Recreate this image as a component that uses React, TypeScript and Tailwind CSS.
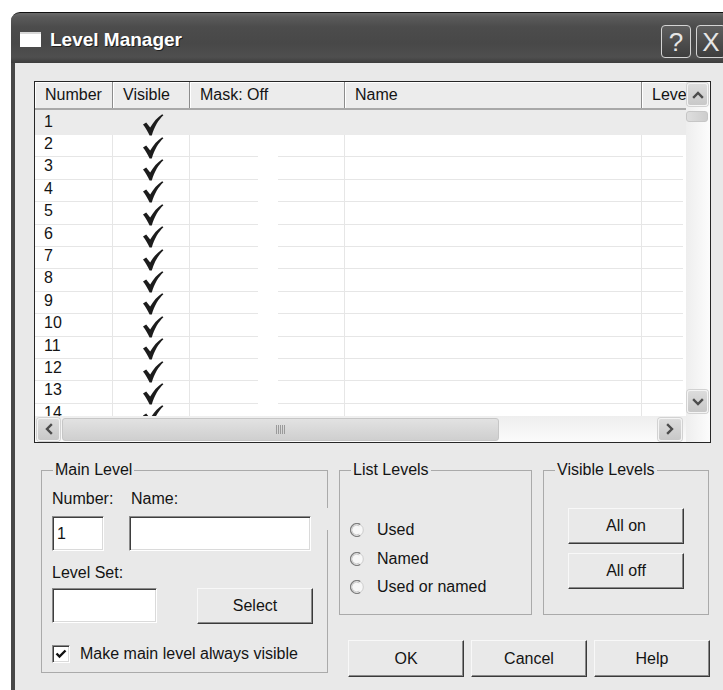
import React from "react";

type Dir = "up" | "down" | "left" | "right";

function Tick() {
  return (
    <svg width="21" height="22" viewBox="0 0 21 22" className="block">
      <path
        d="M0 10.5 L3.2 8.4 L7.2 13.6 C10.2 8 14.2 3.6 19.2 0.2 L20.4 1.3 C15.4 6 11.4 12.6 8.8 21.6 L6.6 21.6 C4.6 17.2 2.6 13.8 0 10.5 Z"
        fill="#1c1c1c"
      />
    </svg>
  );
}

function Chevron({ dir }: { dir: Dir }) {
  const d = {
    up: "M2 8 L6 4 L10 8",
    down: "M2 4 L6 8 L10 4",
    left: "M8 2 L4 6 L8 10",
    right: "M4 2 L8 6 L4 10",
  }[dir];
  return (
    <svg width="12" height="12" viewBox="0 0 12 12" className="block">
      <path d={d} fill="none" stroke="#4c4c4c" strokeWidth="2.4" strokeLinecap="square" strokeLinejoin="miter" />
    </svg>
  );
}

function ScrollButton({ dir, className }: { dir: Dir; className: string }) {
  return (
    <div
      className={`flex items-center justify-center rounded-[3px] border border-[#f4f4f4] bg-[linear-gradient(180deg,#dcdcdc,#c8c8c8)] shadow-[0_0_0_1px_#d2d2d2] ${className}`}
    >
      <Chevron dir={dir} />
    </div>
  );
}

function Grip() {
  return (
    <div className="flex gap-[1px]">
      {[0, 1, 2, 3, 4].map((i) => (
        <div key={i} className="h-[9px] w-[1px] bg-[#9a9a9a]" />
      ))}
    </div>
  );
}

function ListRow({ n, first }: { n: number; first?: boolean }) {
  const cellB = first ? "" : "border-b border-[#e6e6e6]";
  const cellRB = first ? "" : "border-b border-r border-[#e6e6e6]";
  return (
    <div className="flex h-[22.42px] shrink-0">
      <div className={`w-[78px] shrink-0 pl-[9px] leading-[18px] ${cellRB}`}>{n}</div>
      <div className={`w-[77px] shrink-0 pl-[30px] pt-[1.5px] ${cellRB}`}>
        <Tick />
      </div>
      <div className={`w-[68px] shrink-0 ${cellB}`} />
      <div className="w-[20px] shrink-0" />
      <div className={`w-[67px] shrink-0 ${cellRB}`} />
      <div className={`w-[297px] shrink-0 ${cellRB}`} />
      <div className={`w-[41px] shrink-0 ${cellB}`} />
    </div>
  );
}

function ListBox() {
  const rows = Array.from({ length: 13 }, (_, i) => i + 2);
  return (
    <div className="flex h-[362px] w-[677px] shrink-0 border border-[#262626] bg-white">
      <div className="flex min-w-0 flex-1 flex-col">
        <div className="flex min-h-0 flex-1 flex-col overflow-hidden">
          {/* column headers */}
          <div className="flex h-[28px] shrink-0 border-b-2 border-[#a8a8a8] bg-[#ececec]">
            <div className="flex w-[78px] shrink-0 items-center border-r border-[#8c8c8c] pl-[10px] shadow-[inset_1px_1px_0_#ffffff]">
              Number
            </div>
            <div className="flex w-[77px] shrink-0 items-center border-r border-[#8c8c8c] pl-[10px] shadow-[inset_1px_1px_0_#ffffff]">
              Visible
            </div>
            <div className="flex w-[155px] shrink-0 items-center border-r border-[#8c8c8c] pl-[10px] shadow-[inset_1px_1px_0_#ffffff]">
              Mask: Off
            </div>
            <div className="flex w-[297px] shrink-0 items-center border-r border-[#8c8c8c] pl-[10px] shadow-[inset_1px_1px_0_#ffffff]">
              Name
            </div>
            <div className="flex w-[80px] shrink-0 items-center pl-[10px] shadow-[inset_1px_1px_0_#ffffff]">
              Level
            </div>
          </div>
          {/* rows */}
          <div className="h-[25px] shrink-0 bg-[#ebebeb] pt-[2.6px]">
            <ListRow n={1} first />
          </div>
          {rows.map((n) => (
            <ListRow key={n} n={n} />
          ))}
        </div>
        {/* horizontal scrollbar */}
        <div className="flex h-[26px] shrink-0 items-center bg-[linear-gradient(180deg,#eeeeee,#fbfbfb)]">
          <ScrollButton dir="left" className="ml-[2px] h-[23px] w-[23px]" />
          <div className="ml-[2px] flex h-[23px] w-[437px] items-center justify-center rounded-[3px] border border-[#c6c6c6] bg-[linear-gradient(180deg,#e2e2e2,#cfcfcf)]">
            <Grip />
          </div>
          <div className="flex-1" />
          <ScrollButton dir="right" className="mr-[4px] h-[23px] w-[24px]" />
        </div>
      </div>
      {/* vertical scrollbar */}
      <div className="flex w-[24px] shrink-0 flex-col bg-[linear-gradient(90deg,#eeeeee,#fcfcfc)]">
        <ScrollButton dir="up" className="ml-[1px] mt-[1px] h-[23px] w-[21px]" />
        <div className="mt-[5px] h-[11px] w-[22px] rounded-[3px] border border-[#c6c6c6] bg-[linear-gradient(90deg,#dedede,#cdcdcd)]" />
        <div className="flex-1" />
        <ScrollButton dir="down" className="ml-[1px] h-[23px] w-[21px]" />
        <div className="h-[29px] shrink-0" />
      </div>
    </div>
  );
}

function Button({ label, className }: { label: string; className: string }) {
  return (
    <div
      className={`flex items-center justify-center border border-b-[#3a3a3a] border-l-[#f8f8f8] border-r-[#3a3a3a] border-t-[#f8f8f8] bg-[#e9e9e9] shadow-[inset_-1px_-1px_0_#8a8a8a] ${className}`}
    >
      {label}
    </div>
  );
}

function TextBox({ className, children }: { className: string; children?: React.ReactNode }) {
  return (
    <div
      className={`flex items-center border border-b-white border-l-[#8a8a8a] border-r-white border-t-[#8a8a8a] bg-white pl-[4px] shadow-[inset_1px_1px_0_#3e3e3e,inset_-1px_-1px_0_#dadada] ${className}`}
    >
      {children}
    </div>
  );
}

function Radio({ label }: { label: string }) {
  return (
    <div className="flex h-[28.5px] items-center">
      <svg width="14" height="14" viewBox="0 0 14 14" className="block shrink-0">
        <circle cx="7" cy="7" r="6.3" fill="#f7f7f7" stroke="#c4c4c4" strokeWidth="0.8" />
        <path d="M10.2 1.5 A6.4 6.4 0 1 0 10.2 12.5" fill="none" stroke="#7e7e7e" strokeWidth="1.4" />
        <path d="M9.4 2.9 A4.9 4.9 0 1 0 9.4 11.1" fill="none" stroke="#c9c9c9" strokeWidth="1" />
      </svg>
      <span className="ml-[13px] leading-[18px]">{label}</span>
    </div>
  );
}

function Group({
  title,
  className,
  children,
}: {
  title: string;
  className: string;
  children?: React.ReactNode;
}) {
  return (
    <fieldset className={`relative shrink-0 border border-[#aaaaaa] ${className}`}>
      <legend className="ml-[11px] px-[2px] leading-[18px]">{title}</legend>
      {children}
    </fieldset>
  );
}

function TitleBar() {
  return (
    <div className="flex h-[51px] shrink-0 items-start rounded-tl-[9px] border-t border-[#111111] bg-[linear-gradient(180deg,#6a6a6a_0px,#5a5a5a_4px,#4c4c4c_14px,#484848_30px,#4f4f4f_44px,#3c3c3c_50px)] pl-[9px] pr-[25px]">
      <div className="mt-[19px] h-[15px] w-[21px] shrink-0 border-t-2 border-[#d8d8d8] bg-white" />
      <div className="ml-[9px] mt-[16px] text-[19px] font-bold leading-[22px] text-white [text-shadow:1px_1px_0_#1f1f1f]">
        Level Manager
      </div>
      <div className="flex-1" />
      <div className="mt-[12px] flex h-[33px] w-[30px] items-center justify-center rounded-[4px] border border-[#d4d4d4] bg-[linear-gradient(180deg,#5e5e5e,#3e3e3e)] text-[26px] leading-none text-[#e6e6e6]">
        ?
      </div>
      <div className="ml-[5px] mt-[12px] flex h-[33px] w-[30px] items-center justify-center rounded-[4px] border border-[#d4d4d4] bg-[linear-gradient(180deg,#5e5e5e,#3e3e3e)] text-[26px] leading-none text-[#e6e6e6]">
        X
      </div>
    </div>
  );
}

export default function App() {
  return (
    <div className="h-[690px] w-[723px] overflow-hidden bg-white pl-[11px] pt-[12px] font-['Liberation_Sans',Arial,sans-serif] text-[16px] text-[#141414]">
      <div className="flex w-[740px] flex-col">
        <TitleBar />
        <div className="flex h-[627px] flex-col border-l-4 border-[#474747] bg-[#e9e9e9] pl-[19px] pt-[18px]">
          <ListBox />

          <div className="ml-[7px] mt-[18px] flex items-start gap-[11px]">
            {/* main level */}
            <Group title="Main Level" className="h-[212px] w-[287px]">
              <div className="absolute right-[-1px] top-[29px] h-[22px] w-[1px] bg-[#e9e9e9]" />
              <div className="pl-[10px]">
                <div className="mt-[11px] flex leading-[18px]">
                  <span className="w-[79px]">Number:</span>
                  <span>Name:</span>
                </div>
                <div className="mt-[8px] flex gap-[25px]">
                  <TextBox className="h-[35px] w-[52px]">1</TextBox>
                  <TextBox className="h-[35px] w-[182px]" />
                </div>
                <div className="mt-[13px] leading-[18px]">Level Set:</div>
                <div className="mt-[6px] flex items-start gap-[40px]">
                  <TextBox className="h-[35px] w-[105px]" />
                  <Button label="Select" className="h-[36px] w-[116px]" />
                </div>
                <div className="mt-[21px] flex items-center">
                  <div className="flex h-[18px] w-[18px] items-center justify-center border border-b-white border-l-[#8a8a8a] border-r-white border-t-[#8a8a8a] bg-white shadow-[inset_1px_1px_0_#3e3e3e,inset_-1px_-1px_0_#dadada]">
                    <svg width="12" height="12" viewBox="0 0 12 12" className="block">
                      <path d="M1.5 5.5 L4.5 8.5 L10.5 2.5" fill="none" stroke="#111111" strokeWidth="2.4" />
                    </svg>
                  </div>
                  <span className="ml-[10px] leading-[18px]">Make main level always visible</span>
                </div>
              </div>
            </Group>

            <div className="flex flex-col">
              <div className="flex items-start gap-[11px]">
                {/* list levels */}
                <Group title="List Levels" className="h-[154px] w-[193px]">
                  <div className="mt-[37px] pl-[10px]">
                    <Radio label="Used" />
                    <Radio label="Named" />
                    <Radio label="Used or named" />
                  </div>
                </Group>
                {/* visible levels */}
                <Group title="Visible Levels" className="h-[154px] w-[166px]">
                  <div className="flex flex-col pl-[24px]">
                    <Button label="All on" className="mt-[29px] h-[36px] w-[116px]" />
                    <Button label="All off" className="mt-[9px] h-[36px] w-[116px]" />
                  </div>
                </Group>
              </div>
              <div className="ml-[9px] mt-[25px] flex gap-[7px]">
                <Button label="OK" className="h-[37px] w-[116px]" />
                <Button label="Cancel" className="h-[37px] w-[116px]" />
                <Button label="Help" className="h-[37px] w-[116px]" />
              </div>
            </div>
          </div>
        </div>
      </div>
    </div>
  );
}
